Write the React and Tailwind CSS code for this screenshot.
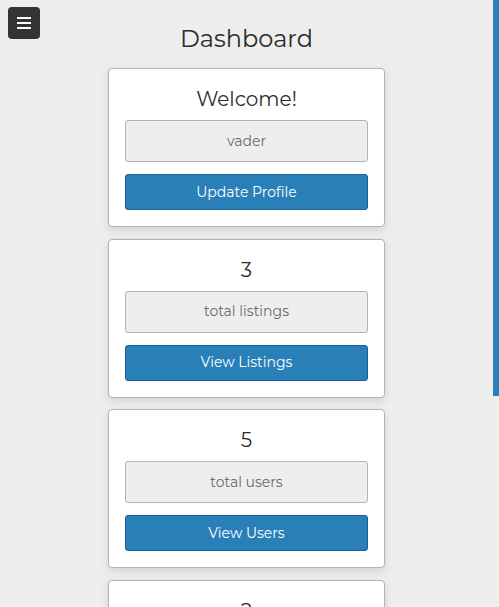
import React from 'react';

const cards = [
    { heading: 'Welcome!', label: 'vader', action: 'Update Profile' },
    { heading: '3', label: 'total listings', action: 'View Listings' },
    { heading: '5', label: 'total users', action: 'View Users' },
    { heading: '2', label: 'total messages', action: 'View Messages' },
];

const StatCard = ({ heading, label, action }) => (
    <div className="w-[277px] shrink-0 rounded-[4px] border border-[#b3b3b3] bg-white px-4 pt-4 pb-4 shadow-[0_3px_8px_rgba(0,0,0,0.12)]">
        <h2 className="mb-[7px] text-center text-[20px] leading-[28px] text-[#2b2b2b]">{heading}</h2>
        <div className="flex h-[42px] items-center justify-center rounded-[3px] border border-[#b3b3b3] bg-[#eeeeee] text-[14px] text-[#6b6b6b]">
            {label}
        </div>
        <button className="mt-3 flex h-[36px] w-full items-center justify-center rounded-[3px] border border-[#1f5f8b] bg-[#2980b9] text-[14px] text-white">
            {action}
        </button>
    </div>
);

export default function App() {
    return (
        <div className="flex h-[607px] overflow-hidden bg-[#eeeeee] font-['Montserrat','Open_Sans',sans-serif]">
            <div className="relative flex-1">
                <button className="absolute left-2 top-[7px] flex h-[32px] w-[32px] flex-col items-center justify-center gap-[3px] rounded-[4px] bg-[#333333]">
                    <span className="h-[2px] w-[14px] bg-white" />
                    <span className="h-[2px] w-[14px] bg-white" />
                    <span className="h-[2px] w-[14px] bg-white" />
                </button>
                <div className="flex flex-col items-center">
                    <h1 className="mt-[21px] mb-[12px] text-[24px] leading-[35px] text-[#2b2b2b]">Dashboard</h1>
                    <div className="flex flex-col items-center gap-[11.5px]">
                        {cards.map((c, i) => (
                            <StatCard key={i} {...c} />
                        ))}
                    </div>
                </div>
            </div>
            <div className="w-[6px]">
                <div className="h-[396px] bg-[#2980b9]" />
            </div>
        </div>
    );
}
